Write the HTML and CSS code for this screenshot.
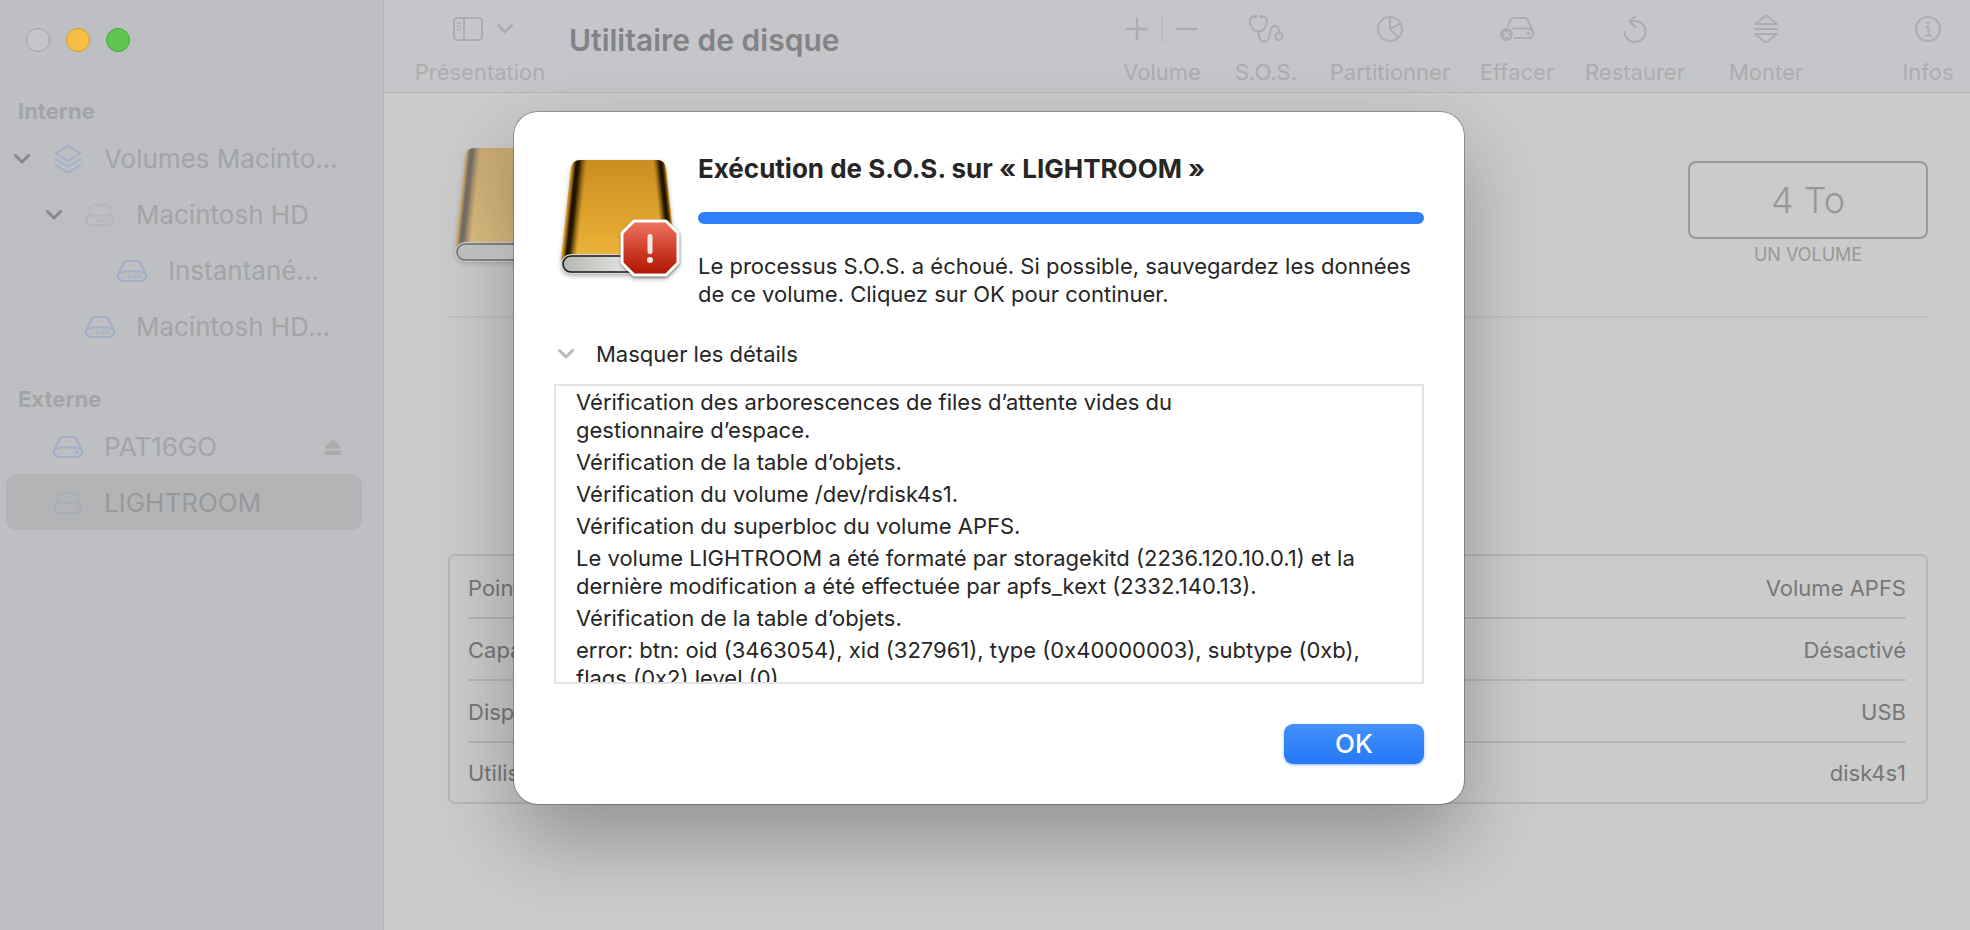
FILE: index.html
```html
<!DOCTYPE html>
<html lang="fr">
<head>
    <meta charset="UTF-8" />
    <meta name="viewport" content="width=device-width, initial-scale=1" />
    <title>Utilitaire de disque</title>
    <link rel="stylesheet" href="styles.css">
</head>
<body>

    <!-- Shared icons -->
    <svg class="sprite" width="0" height="0" aria-hidden="true">
        <defs>
            <linearGradient id="gold" x1="0" y1="0" x2="0" y2="1">
                <stop offset="0" stop-color="#c98a20" />
                <stop offset="0.5" stop-color="#dfa22d" />
                <stop offset="1" stop-color="#f3be40" />
            </linearGradient>
            <linearGradient id="edgeLeft" gradientUnits="userSpaceOnUse" x1="17" y1="17" x2="32" y2="18.600">
                <stop offset="0" stop-color="#e0a030" />
                <stop offset="0.12" stop-color="#a87416" />
                <stop offset="0.3" stop-color="#1c1200" />
                <stop offset="0.5" stop-color="#2a1a00" />
                <stop offset="1" stop-color="#6b4505" stop-opacity="0" />
            </linearGradient>
            <linearGradient id="edgeRight" gradientUnits="userSpaceOnUse" x1="112" y1="17" x2="100" y2="18.300">
                <stop offset="0" stop-color="#e0a030" />
                <stop offset="0.12" stop-color="#7a500a" />
                <stop offset="0.3" stop-color="#1c1200" />
                <stop offset="0.5" stop-color="#2a1a00" />
                <stop offset="1" stop-color="#6b4505" stop-opacity="0" />
            </linearGradient>
            <linearGradient id="steel" x1="0" y1="0" x2="1" y2="0">
                <stop offset="0" stop-color="#b4b6b0" />
                <stop offset="0.5" stop-color="#dcdedb" />
                <stop offset="1" stop-color="#b4b6b0" />
            </linearGradient>
            <linearGradient id="stop" x1="0" y1="0" x2="0" y2="1">
                <stop offset="0" stop-color="#ee7763" />
                <stop offset="0.5" stop-color="#d0402c" />
                <stop offset="1" stop-color="#ae1400" />
            </linearGradient>
            <clipPath id="cover">
                <path d="M27 8H103Q111 8 112 17L122 108H7L17 17Q18 8 27 8Z" />
            </clipPath>
        </defs>
        <symbol id="chevron" viewBox="0 0 16 10">
            <path d="M1.5 1.5L8 8L14.5 1.5" fill="none" stroke="currentColor" stroke-width="3" stroke-linecap="round" stroke-linejoin="round" />
        </symbol>
        <symbol id="layers" viewBox="0 0 28 30">
            <g fill="none" stroke="currentColor" stroke-width="2" stroke-linecap="round" stroke-linejoin="round">
                <path d="M12 2.800Q14 1.500 16 2.800L26.500 9.500L16 16Q14 17 12 16L1.500 9.500Z" />
                <path d="M1.500 15L12 21.500Q14 22.700 16 21.500L26.500 15" />
                <path d="M1.500 21L12 27.500Q14 28.700 16 27.500L26.500 21" />
            </g>
        </symbol>
        <symbol id="drive" viewBox="0 0 30 22">
            <g fill="none" stroke="currentColor" stroke-width="2">
                <path d="M1 16C1 14 2 12.500 2.600 11.500L6.500 3C7 1.600 8 1 9.300 1H20.700C22 1 23 1.600 23.500 3L27.400 11.500C28 12.500 29 14 29 16A5 5 0 0 1 24 21H6A5 5 0 0 1 1 16Z" />
                <path d="M2 14C3 12.300 4.500 11.500 6 11.500H24C25.500 11.500 27 12.300 28 14" />
            </g>
        </symbol>
        <symbol id="driveInternal" viewBox="0 0 30 22">
            <use href="#drive" width="30" height="22" />
            <path d="M12 14.500V18.500M15 14.500V18.500M18 14.500V18.500M21 14.500V18.500M24 14.500V18.500" stroke="currentColor" stroke-width="1.500" />
        </symbol>
        <symbol id="driveExternal" viewBox="0 0 30 22">
            <use href="#drive" width="30" height="22" />
            <circle cx="24" cy="16.500" r="1.800" fill="currentColor" />
        </symbol>
        <symbol id="disk" viewBox="0 0 128 128">
            <g clip-path="url(#cover)">
                <rect x="0" y="0" width="128" height="128" fill="url(#gold)" />
                <path d="M0 0H60V128H0Z" fill="url(#edgeLeft)" />
                <path d="M128 0H70V128H128Z" fill="url(#edgeRight)" />
            </g>
            <rect x="7" y="102" width="115" height="20" rx="10" fill="#d5d7d3" />
            <rect x="9" y="104" width="111" height="16" rx="8" fill="url(#steel)" stroke="#14171a" stroke-width="1.500" />
        </symbol>
    </svg>

    <div class="window">
        <aside class="sidebar">
            <div class="lights">
                <button class="light close" aria-label="Fermer"></button>
                <button class="light minimize" aria-label="Réduire"></button>
                <button class="light zoom" aria-label="Agrandir"></button>
            </div>

            <section class="group">
                <h2>Interne</h2>
                <ul>
                    <li class="level-0">
                        <span class="toggle"><svg class="chevron"><use href="#chevron" /></svg></span>
                        <span class="icon"><svg class="layers"><use href="#layers" /></svg></span>
                        <span class="name">Volumes Macinto…</span>
                    </li>
                    <li class="level-1">
                        <span class="toggle"><svg class="chevron"><use href="#chevron" /></svg></span>
                        <span class="icon faint"><svg class="drive"><use href="#driveInternal" /></svg></span>
                        <span class="name">Macintosh HD</span>
                    </li>
                    <li class="level-2">
                        <span class="toggle"></span>
                        <span class="icon"><svg class="drive"><use href="#driveInternal" /></svg></span>
                        <span class="name">Instantané…</span>
                    </li>
                    <li class="level-1">
                        <span class="toggle"></span>
                        <span class="icon"><svg class="drive"><use href="#driveInternal" /></svg></span>
                        <span class="name">Macintosh HD…</span>
                    </li>
                </ul>
            </section>

            <section class="group">
                <h2>Externe</h2>
                <ul>
                    <li class="level-0">
                        <span class="toggle"></span>
                        <span class="icon"><svg class="drive"><use href="#driveExternal" /></svg></span>
                        <span class="name">PAT16GO</span>
                        <button class="eject" aria-label="Éjecter">
                            <svg width="18" height="18" viewBox="0 0 18 18"><path d="M8 1.500Q9 0.500 10 1.500L17 9Q17.500 10.500 16 10.500H2Q0.500 10.500 1 9Z" fill="currentColor" /><rect x="0.500" y="12.500" width="17" height="4.500" rx="1" fill="currentColor" /></svg>
                        </button>
                    </li>
                    <li class="level-0 selected">
                        <span class="toggle"></span>
                        <span class="icon faint"><svg class="drive"><use href="#driveExternal" /></svg></span>
                        <span class="name">LIGHTROOM</span>
                    </li>
                </ul>
            </section>
        </aside>

        <div class="main">
            <header class="toolbar">
                <button class="tool view">
                    <span class="tool-icon">
                        <svg width="30" height="24" viewBox="0 0 30 24"><g fill="none" stroke="currentColor" stroke-width="2"><rect x="1" y="1" width="28" height="22" rx="3" /><path d="M11 1V23" /><path d="M4 6H8M4 9.500H8M4 13H8" stroke-width="1.500" /></g></svg>
                        <svg class="chevron"><use href="#chevron" /></svg>
                    </span>
                    Présentation
                </button>
                <h1>Utilitaire de disque</h1>
                <div class="tools">
                    <button class="tool">
                        <span class="tool-icon">
                            <svg width="72" height="28" viewBox="0 0 72 28"><path d="M11 4V24M1 14H21M51 14H71" stroke="currentColor" stroke-width="2.500" stroke-linecap="round" /><path d="M36 1V28" stroke="#bdbdbf" stroke-width="2" /></svg>
                        </span>
                        Volume
                    </button>
                    <button class="tool">
                        <span class="tool-icon">
                            <svg width="36" height="30" viewBox="0 0 36 30"><g fill="none" stroke="currentColor" stroke-width="2" stroke-linecap="round"><path d="M7 2.500C3 2.500 2 4 2 7C2 13 6 17.500 10.500 17.500C15 17.500 19 13 19 7C19 4 18 2.500 14 2.500" /><path d="M10.500 17.500C10.500 24 12 27.500 16 27.500C25 27.500 19 12 27 12C31 12 31 15 31 19" /><circle cx="31" cy="22.500" r="3.500" /></g><circle cx="7.500" cy="2.500" r="1.800" fill="currentColor" /><circle cx="13.500" cy="2.500" r="1.800" fill="currentColor" /></svg>
                        </span>
                        S.O.S.
                    </button>
                    <button class="tool">
                        <span class="tool-icon">
                            <svg width="28" height="28" viewBox="0 0 28 28"><g fill="none" stroke="currentColor" stroke-width="2"><circle cx="14" cy="14" r="12" /><path d="M14 2V14L22.500 22.500M14 14L24.500 8.500" /></g></svg>
                        </span>
                        Partitionner
                    </button>
                    <button class="tool">
                        <span class="tool-icon">
                            <svg width="36" height="28" viewBox="0 0 36 28"><g fill="none" stroke="currentColor" stroke-width="2"><path d="M8.500 11.500L11.500 5C12.200 3.500 13 3 14.500 3H25.500C27 3 28 3.500 28.600 5L33.500 15C35.500 19.500 33.500 23 30 23H15" /><path d="M13 13.500H29C31 13.500 32.500 14 33.500 15.500" /></g><circle cx="29" cy="18" r="1.800" fill="currentColor" /><circle cx="7.500" cy="19.500" r="6.500" fill="currentColor" /><path d="M5.200 17.200L9.800 21.800M9.800 17.200L5.200 21.800" stroke="#c5c6ca" stroke-width="1.800" stroke-linecap="round" /></svg>
                        </span>
                        Effacer
                    </button>
                    <button class="tool">
                        <span class="tool-icon">
                            <svg width="26" height="30" viewBox="0 0 26 30"><g fill="none" stroke="currentColor" stroke-width="2" stroke-linecap="round" stroke-linejoin="round"><path d="M2.500 17.500A10.500 10.500 0 1 0 13 7H8" /><path d="M13.500 2L7.500 7.500L13.500 13" /></g></svg>
                        </span>
                        Restaurer
                    </button>
                    <button class="tool">
                        <span class="tool-icon">
                            <svg width="26" height="30" viewBox="0 0 26 30"><g fill="none" stroke="currentColor" stroke-width="2" stroke-linecap="round" stroke-linejoin="round"><path d="M2 10L12 2Q13 1 14 2L24 10Z" /><path d="M2 15H24" /><path d="M2 20L12 28Q13 29 14 28L24 20Z" /></g></svg>
                        </span>
                        Monter
                    </button>
                    <button class="tool infos">
                        <span class="tool-icon">
                            <svg width="28" height="28" viewBox="0 0 28 28"><circle cx="14" cy="14" r="12" fill="none" stroke="currentColor" stroke-width="2" /><circle cx="14" cy="8" r="1.800" fill="currentColor" /><path d="M11.500 12H14.500V20M11 20.500H18" fill="none" stroke="currentColor" stroke-width="2" /></svg>
                        </span>
                        Infos
                    </button>
                </div>
            </header>

            <div class="content">
                <div class="volume-header">
                    <svg class="disk"><use href="#disk" /></svg>
                    <div class="capacity">
                        <div class="capacity-box">4 To</div>
                        <div class="capacity-label">UN VOLUME</div>
                    </div>
                </div>

                <div class="info-table">
                    <table>
                        <tbody>
                            <tr><th scope="row">Point de montage :</th><td>Volume APFS</td></tr>
                            <tr><th scope="row">Capacité :</th><td>Désactivé</td></tr>
                            <tr><th scope="row">Disponible :</th><td>USB</td></tr>
                            <tr><th scope="row">Utilisé :</th><td>disk4s1</td></tr>
                        </tbody>
                    </table>
                </div>
            </div>
        </div>
    </div>

    <!-- First Aid sheet -->
    <div class="overlay">
        <div class="sheet" role="dialog" aria-labelledby="sheetTitle">
            <div class="sheet-header">
                <svg class="disk" viewBox="0 0 128 128">
                    <use href="#disk" />
                    <path class="badge" d="M80 69H112L124 81V111L112 123H80L68 111V81Z" fill="url(#stop)" stroke="#fff" stroke-width="3" stroke-linejoin="round" />
                    <rect x="93.500" y="82" width="5" height="20" rx="2.500" fill="#f4e8e6" />
                    <circle cx="96" cy="108" r="3" fill="#f4e8e6" />
                </svg>
                <div class="sheet-text">
                    <h2 id="sheetTitle">Exécution de S.O.S. sur « LIGHTROOM »</h2>
                    <progress value="100" max="100" aria-labelledby="sheetTitle"></progress>
                    <p>Le processus S.O.S. a échoué. Si possible, sauvegardez les données<br>de ce volume. Cliquez sur OK pour continuer.</p>
                </div>
            </div>

            <button class="disclosure" aria-expanded="true" aria-controls="log">
                <svg class="chevron"><use href="#chevron" /></svg>
                Masquer les détails
            </button>

            <div class="log" id="log">
                <p>Vérification des arborescences de files d’attente vides du<br>gestionnaire d’espace.</p>
                <p>Vérification de la table d’objets.</p>
                <p>Vérification du volume /dev/rdisk4s1.</p>
                <p>Vérification du superbloc du volume APFS.</p>
                <p>Le volume LIGHTROOM a été formaté par storagekitd (2236.120.10.0.1) et la<br>dernière modification a été effectuée par apfs_kext (2332.140.13).</p>
                <p>Vérification de la table d’objets.</p>
                <p>error: btn: oid (3463054), xid (327961), type (0x40000003), subtype (0xb),<br>flags (0x2) level (0)</p>
            </div>

            <div class="actions">
                <button class="ok">OK</button>
            </div>
        </div>
    </div>

</body>
</html>
```
FILE: styles.css
```css
* {
    margin: 0;
    padding: 0;
    box-sizing: border-box;
    font-family: Inter, 'Liberation Sans', sans-serif;
}
body {
    background: #cbcbcb;
    color: #262626;
    font-size: 22px;
    line-height: 28px;
    overflow: hidden;
}
button {
    background: none;
    border: none;
    color: inherit;
    font-size: inherit;
    line-height: inherit;
}
ul {
    list-style: none;
}
svg {
    display: block;
    flex: none;
}
.sprite {
    position: absolute;
}
.chevron {
    width: 16px;
    height: 10px;
}
.disk {
    width: 128px;
    height: 128px;
    filter: drop-shadow(0 2px 2px rgba(0, 0, 0, 0.3));
}
.window {
    display: flex;
    min-height: 100vh;
}

/* Sidebar */
.sidebar {
    width: 384px;
    flex: none;
    padding: 28px 0;
    background: #bdbfc3;
    border-right: 1px solid #b4b5b8;
    color: #a3a4a6;
}
.lights {
    display: flex;
    gap: 16px;
    padding-left: 26px;
    margin-bottom: 38px;
}
.light {
    width: 24px;
    height: 24px;
    border-radius: 50%;
    border: 1px solid #a3a3a8;
    background: #c4c5ca;
}
.light.minimize {
    background: #f6be46;
    border-color: #d99f31;
}
.light.zoom {
    background: #5fc651;
    border-color: #47a638;
}
.group {
    margin-bottom: 24px;
}
.group h2 {
    padding: 2px 0 0 18px;
    font-size: 22px;
    font-weight: 700;
    line-height: 38px;
}
.group li {
    display: flex;
    align-items: center;
    height: 56px;
    margin: 0 21px 0 6px;
    padding: 2px 20px 0 0;
    border-radius: 10px;
    font-size: 26px;
    white-space: nowrap;
}
.group .level-1 {
    padding-left: 32px;
}
.group .level-2 {
    padding-left: 64px;
}
.group .selected {
    background: #b3b4b6;
    color: #98999b;
}
.toggle {
    width: 32px;
    display: flex;
    justify-content: center;
    color: #88898b;
}
.icon {
    width: 32px;
    margin: 0 20px 0 14px;
    display: flex;
    justify-content: center;
    color: #a0b0c9;
}
.icon.faint {
    color: #b4b6bb;
}
.selected .icon.faint {
    color: #a9adb4;
}
.layers {
    width: 28px;
    height: 30px;
}
.drive {
    width: 30px;
    height: 22px;
}
.name {
    flex: 1;
}
.eject {
    color: #abacac;
}

/* Toolbar */
.main {
    flex: 1;
    min-width: 0;
}
.toolbar {
    display: flex;
    align-items: center;
    height: 93px;
    padding-left: 20px;
    background: #c5c6ca;
    border-bottom: 1px solid #b5b6b9;
    color: #acadaf;
}
.toolbar h1 {
    flex: 1;
    padding: 0 0 12px 13px;
    font-size: 30px;
    font-weight: 600;
    color: #828384;
    white-space: nowrap;
}
.tools {
    display: grid;
    grid-template-columns: 100px 108px 140px 114px 122px 140px 134px;
}
.tool {
    display: flex;
    flex-direction: column;
    align-items: center;
    gap: 14px;
    padding-top: 8px;
}
.tool.infos {
    padding-left: 50px;
}
.tool.view {
    width: 152px;
}
.view .tool-icon {
    padding-left: 6px;
}
.tool-icon {
    display: flex;
    align-items: center;
    gap: 14px;
    height: 30px;
}

/* Volume details */
.content {
    padding: 47px 42px 0 64px;
}
.volume-header {
    display: flex;
    justify-content: space-between;
    height: 178px;
    border-bottom: 2px solid #c0c0c0;
}
.volume-header .disk {
    opacity: 0.5;
}
.capacity {
    width: 240px;
    padding-top: 21px;
    text-align: center;
    color: #989898;
}
.capacity-box {
    border: 2px solid #989898;
    border-radius: 8px;
    font-size: 36px;
    font-weight: 300;
    line-height: 74px;
}
.capacity-label {
    font-size: 18px;
    line-height: 32px;
}
.info-table {
    margin-top: 236px;
    padding: 0 20px 0 18px;
    border: 2px solid #b6b6b6;
    border-radius: 7px;
}
.info-table table {
    width: 100%;
    border-collapse: collapse;
    color: #777777;
}
.info-table th, .info-table td {
    height: 62px;
    padding-top: 2px;
    font-weight: 400;
    text-align: left;
    border-bottom: 2px solid #b6b6b6;
}
.info-table td {
    text-align: right;
}
.info-table tr:last-child th, .info-table tr:last-child td {
    height: 60px;
    padding-top: 0;
    border-bottom: none;
}

/* Sheet */
.overlay {
    position: absolute;
    inset: 0;
    display: flex;
    justify-content: center;
    align-items: flex-start;
    padding: 112px 0 0 8px;
}
.sheet {
    width: 950px;
    padding: 40px;
    background: #ffffff;
    border-radius: 24px;
    box-shadow: 0 0 0 1px rgba(0, 0, 0, 0.25), 0 36px 80px rgba(0, 0, 0, 0.28);
}
.sheet-header {
    display: flex;
    gap: 16px;
    margin-bottom: 32px;
}
.badge {
    filter: drop-shadow(0 1px 1px rgba(0, 0, 0, 0.4));
}
.sheet-text {
    flex: 1;
    white-space: nowrap;
}
.sheet-text h2 {
    font-size: 26px;
    font-weight: 700;
    line-height: 34px;
}
progress {
    display: block;
    appearance: none;
    width: 100%;
    height: 12px;
    margin: 26px 0 28px;
    border: none;
    border-radius: 6px;
    overflow: hidden;
}
progress::-webkit-progress-bar {
    background: #e5e5e5;
}
progress::-webkit-progress-value {
    background: #2f80f7;
}
.disclosure {
    display: flex;
    align-items: center;
    gap: 22px;
    padding-left: 4px;
    margin-bottom: 16px;
}
.disclosure .chevron {
    color: #b9b9b9;
}
.log {
    height: 300px;
    padding: 2px 20px;
    border: 2px solid #e3e3e3;
    overflow: hidden;
    white-space: nowrap;
}
.log p {
    margin-bottom: 4px;
}
.actions {
    display: flex;
    justify-content: flex-end;
    margin-top: 40px;
}
.ok {
    width: 140px;
    height: 40px;
    border-radius: 9px;
    background: linear-gradient(#4391f9, #2478f7);
    box-shadow: 0 1px 3px rgba(36, 120, 247, 0.5);
    color: #ffffff;
    font-size: 26px;
    font-weight: 500;
}
```
